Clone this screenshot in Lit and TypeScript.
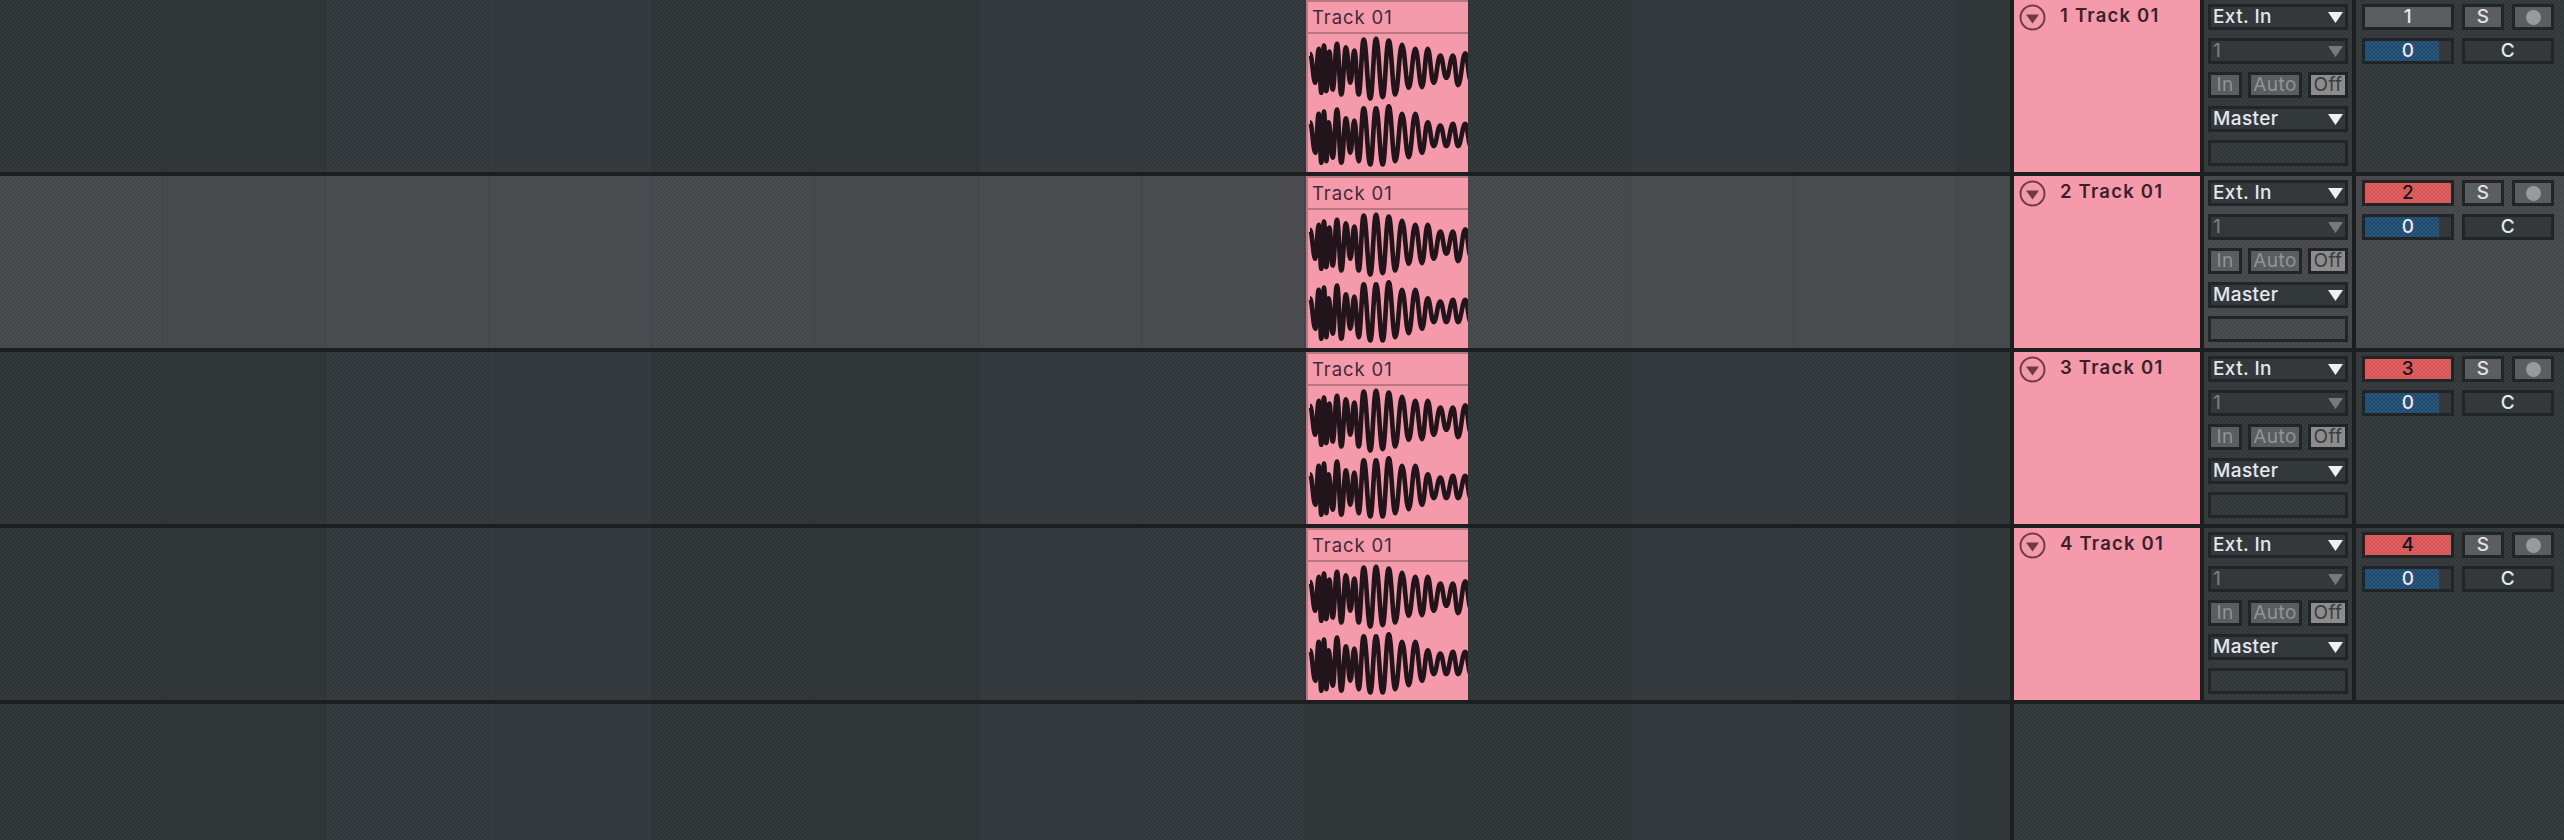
import { LitElement, html, css, svg } from "lit";
import { customElement } from "lit/decorators.js";

// Peaks and troughs of the waveform, in px inside the clip's wave area (x, y).
const raw = (pts: number[][], inset: number) =>
  pts.map(([x, y], i) => [x / 3 - 16, y / 3 - 34 + (i % 2 === 0 ? inset : -inset)]);
const I = 2.2;
const topWave = raw(
  [[54,155],[70,255],[80,140],[88,285],[96,130],[103,280],[112,148],[122,275],[135,125],[148,290],[162,135],[175,255],[187,145],[200,290],[215,112],[235,302],[252,110],[272,298],[290,115],[310,290],[330,128],[350,270],[370,140],[390,268],[407,140],[425,255],[445,160],[463,240],[483,160],[498,262],[520,153],[536,248]],
  I
);
const botWave = raw(
  [[54,360],[70,465],[80,335],[88,495],[96,328],[103,490],[110,360],[122,480],[135,322],[148,495],[162,348],[175,465],[187,355],[200,490],[215,318],[235,500],[252,318],[272,500],[290,312],[310,490],[330,335],[350,478],[370,335],[390,465],[407,360],[425,445],[445,370],[463,445],[483,365],[498,445],[520,365],[536,445]],
  I
);
const toPath = (p: number[][]) => {
  let d = `M${p[0][0].toFixed(1)} ${p[0][1].toFixed(1)}`;
  for (let i = 1; i < p.length; i++) {
    const [x0, y0] = p[i - 1];
    const [x1, y1] = p[i];
    const a = x0 + (x1 - x0) * 0.42;
    const b = x0 + (x1 - x0) * 0.58;
    d += `C${a.toFixed(1)} ${y0.toFixed(1)} ${b.toFixed(1)} ${y1.toFixed(1)} ${x1.toFixed(1)} ${y1.toFixed(1)}`;
  }
  return d;
};
const wavePaths = [toPath(topWave), toPath(botWave)];

@customElement("app-root")
export class AppRoot extends LitElement {
  static styles = css`
    :host {
      display: block;
      width: 2564px;
      height: 840px;
      overflow: hidden;
      background: #1c1e1f;
      font-family: Inter, "Liberation Sans", sans-serif;
      --tex: repeating-conic-gradient(rgba(255, 255, 255, 0.022) 0 25%, rgba(0, 0, 0, 0.022) 0 50%);
      --tex-strong: repeating-conic-gradient(rgba(255, 255, 255, 0.06) 0 25%, rgba(0, 0, 0, 0.05) 0 50%);
      --panel: #33383b;
      --dark: #2f3437;
      --line: #1c1e1f;
    }
    .row {
      display: grid;
      grid-template-columns: 2010px 186px 148px 208px;
      column-gap: 4px;
      height: 172px;
      margin-bottom: 4px;
      background: var(--line);
      --band-a: #2f3437;
      --band-b: #32383b;
      --band-a-tex: var(--tex);
      --band-b-tex: var(--tex);
      --panel: #33383b;
      --grid: rgba(0, 0, 0, 0.05);
    }
    .row.sel {
      --band-a: #45494b;
      --band-b: #4a4b4f;
      --band-b-tex: none;
      --panel: #46484b;
      --grid: rgba(50, 58, 62, 0.35);
    }
    .row.empty {
      height: 136px;
      margin: 0;
      grid-template-columns: 2010px 550px;
    }
    .lane {
      position: relative;
      display: grid;
      grid-template-columns: repeat(12, 163.1px) 1fr;
      overflow: hidden;
    }
    .cell {
      border-right: 1px solid var(--grid);
      background-color: var(--band-a);
      background-image: var(--band-a-tex);
      background-size: 4px 4px;
    }
    .cell.b {
      background-color: var(--band-b);
      background-image: var(--band-b-tex);
    }
    .cell.end {
      border-right: 0;
    }
    .clip {
      position: absolute;
      left: 1306px;
      top: 0;
      bottom: 0;
      width: 162px;
      background: #f59aab;
      box-sizing: border-box;
      border-left: 2px solid #b87682;
      display: flex;
      flex-direction: column;
    }
    .clip-head {
      box-sizing: border-box;
      height: 34px;
      flex: none;
      border-top: 2px solid #b87682;
      border-bottom: 2px solid #b87682;
      padding-left: 4px;
      font-size: 18.5px;
      letter-spacing: 0.9px;
      line-height: 30px;
      color: #3f2a3a;
      white-space: nowrap;
    }
    .wave {
      display: block;
      flex: none;
    }
    .wave path {
      fill: none;
      stroke: #21141a;
      stroke-width: 4.6;
      stroke-linejoin: round;
    }
    .title {
      background: #f59aab;
      display: flex;
      align-items: flex-start;
      padding: 4px 0 0 5px;
      gap: 14px;
      color: #3c1f2a;
      font-size: 18.5px;
      font-weight: 600;
      letter-spacing: 1.2px;
      line-height: 22px;
      white-space: nowrap;
    }
    .fold {
      flex: none;
      display: block;
    }
    .panel {
      background-color: var(--panel);
      background-image: var(--tex);
      background-size: 4px 4px;
    }
    .io {
      box-sizing: border-box;
      padding: 4px 4px 0;
      display: flex;
      flex-direction: column;
      gap: 8px;
    }
    .box {
      box-sizing: border-box;
      height: 26px;
      border: 3px solid #222526;
      background-color: #33383b;
      color: #e4e8ec;
      font-size: 19px;
      font-weight: 500;
      letter-spacing: 0.4px;
      line-height: 20px;
      display: flex;
      align-items: center;
      white-space: nowrap;
    }
    .dd {
      justify-content: space-between;
      padding: 0 2px 0 2px;
    }
    .dd.off {
      color: #77797b;
    }
    .dd svg {
      display: block;
      fill: #eef0f2;
    }
    .dd.off svg {
      fill: #77797b;
    }
    .blank {
      background-color: transparent;
    }
    .mon {
      display: flex;
      gap: 6px;
    }
    .btn {
      justify-content: center;
      background: #5a5e61;
      color: #8f9396;
      font-weight: 400;
    }
    .w-in {
      width: 34px;
    }
    .w-auto {
      width: 54px;
    }
    .w-off {
      width: 40px;
      background: #8c8c8c;
      color: #3a3c40;
    }
    .ctl {
      box-sizing: border-box;
      padding: 4px 10px 0 6px;
      display: grid;
      grid-template-columns: 92px 42px 42px;
      grid-auto-rows: 26px;
      gap: 8px;
      align-content: start;
    }
    .num {
      justify-content: center;
      background: #5a5e61;
      color: #e6e8ea;
    }
    .num.arm {
      background-color: #e0575a;
      background-image: var(--tex-strong);
      background-size: 4px 4px;
      color: #12151a;
    }
    .s {
      justify-content: center;
      background: #5a5e61;
      color: #e0e2e4;
    }
    .dot {
      width: 15px;
      height: 15px;
      border-radius: 50%;
      background: #9a9a9c;
    }
    .pan {
      position: relative;
      justify-content: center;
      color: #e6eaee;
    }
    .pan i {
      position: absolute;
      left: 0;
      top: 0;
      bottom: 0;
      width: 74px;
      background-color: #214d74;
      background-image: var(--tex-strong);
      background-size: 4px 4px;
    }
    .pan span {
      position: relative;
    }
    .c {
      grid-column: span 2;
      justify-content: center;
      color: #e6eaee;
    }
  `;

  private lane() {
    const cells = Array.from({ length: 13 }, (_, i) => {
      const b = Math.floor(i / 2) % 2 === 1;
      return html`<div class="cell ${b ? "b" : ""} ${i === 12 ? "end" : ""}"></div>`;
    });
    return cells;
  }

  private track(n: number) {
    const sel = n === 2;
    const arm = n > 1;
    return html`
      <div class="row ${sel ? "sel" : ""}">
        <div class="lane">
          ${this.lane()}
          <div class="clip">
            <div class="clip-head">Track 01</div>
            <svg class="wave" width="160" height="138" viewBox="0 0 160 138">
              ${wavePaths.map((d) => svg`<path d=${d}></path>`)}
            </svg>
          </div>
        </div>
        <div class="title">
          <svg class="fold" width="27" height="27" viewBox="0 0 27 27">
            <circle cx="13.5" cy="13.5" r="12" fill="none" stroke="#6e3d4c" stroke-width="2"></circle>
            <path d="M7 10.5h13L13.5 19.5z" fill="#6a3a4a"></path>
          </svg>
          <span>${n} Track 01</span>
        </div>
        <div class="panel io">
          ${this.dropdown("Ext. In", false)} ${this.dropdown("1", true)}
          <div class="mon">
            <div class="box btn w-in">In</div>
            <div class="box btn w-auto">Auto</div>
            <div class="box btn w-off">Off</div>
          </div>
          ${this.dropdown("Master", false)}
          <div class="box blank"></div>
        </div>
        <div class="panel ctl">
          <div class="box num ${arm ? "arm" : ""}">${n}</div>
          <div class="box s">S</div>
          <div class="box s"><div class="dot"></div></div>
          <div class="box pan"><i></i><span>0</span></div>
          <div class="box c">C</div>
        </div>
      </div>
    `;
  }

  private dropdown(label: string, off: boolean) {
    return html`<div class="box dd ${off ? "off" : ""}">
      <span>${label}</span>
      <svg width="15" height="11" viewBox="0 0 15 11"><path d="M0 0h15L7.5 11z"></path></svg>
    </div>`;
  }

  render() {
    return html`
      ${[1, 2, 3, 4].map((n) => this.track(n))}
      <div class="row empty">
        <div class="lane">${this.lane()}</div>
        <div class="panel"></div>
      </div>
    `;
  }
}
